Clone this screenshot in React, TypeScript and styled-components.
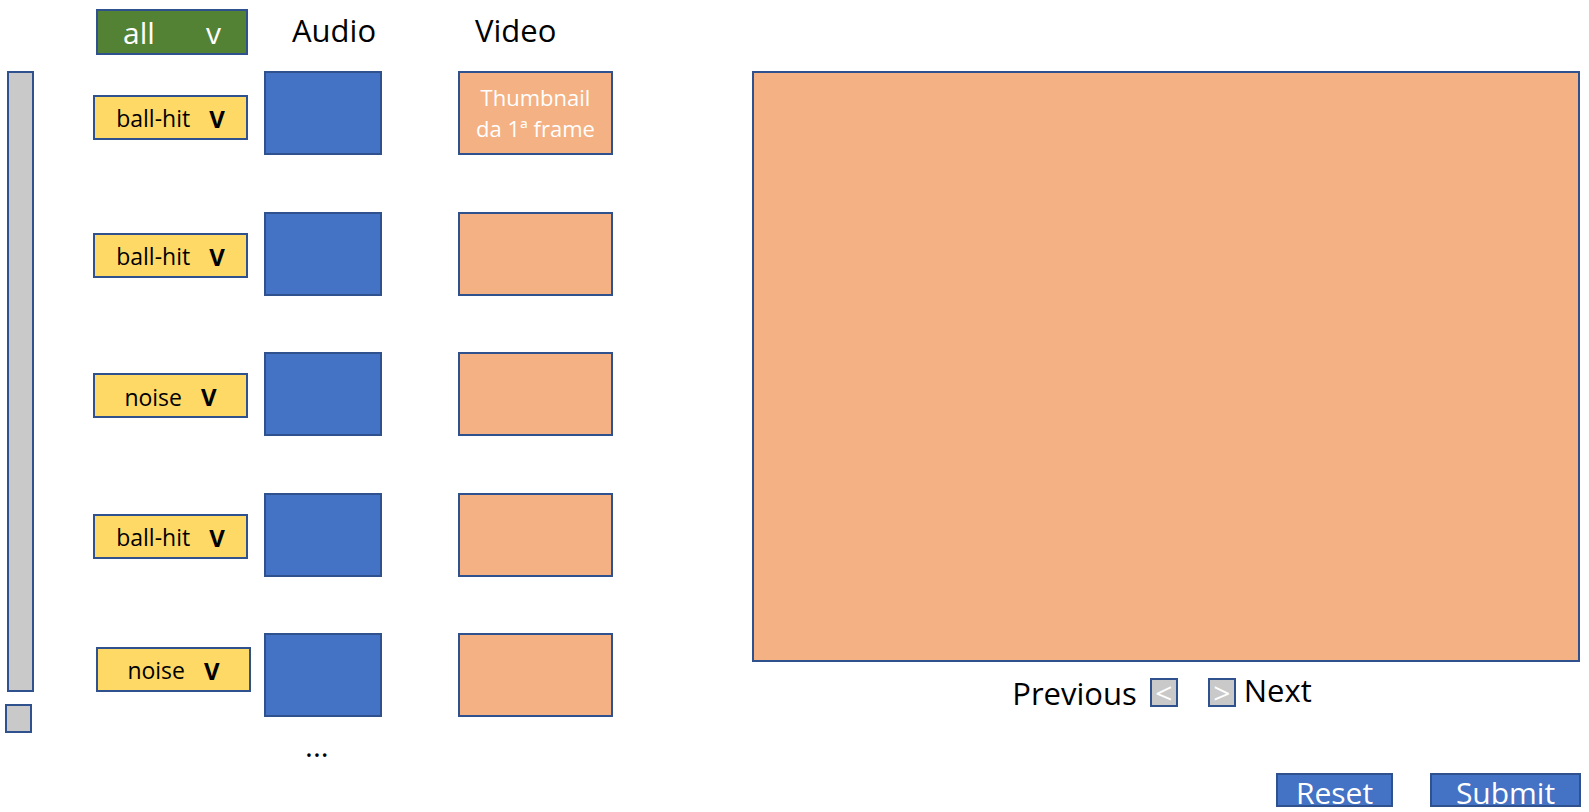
import styled, { createGlobalStyle } from "styled-components";

const BORDER = "#2f528f";

const GlobalStyle = createGlobalStyle`
  * {
    box-sizing: border-box;
  }
  body {
    margin: 0;
    background: #ffffff;
    color: #000000;
    font-family: "Open Sans", "Noto Sans", sans-serif;
  }
`;

const SPage = styled.div`
  display: flex;
  width: 1589px;
  height: 812px;
  padding-top: 9px;
  overflow: hidden;
`;

const SScrollbar = styled.div`
  display: flex;
  flex-direction: column;
  gap: 12px;
  margin-left: 7px;
  margin-top: 62px;
`;

const STrack = styled.div`
  width: 27px;
  height: 621px;
  background: #c9c9c9;
  border: 2px solid ${BORDER};
`;

const SThumb = styled.div`
  width: 27px;
  height: 29px;
  margin-left: -2px;
  background: #c9c9c9;
  border: 2px solid ${BORDER};
`;

const SList = styled.div`
  display: flex;
  flex-direction: column;
  margin-left: 59px;
`;

const SHeader = styled.div`
  display: grid;
  grid-template-columns: 171px 194px 155px;
  align-items: center;
  height: 46px;
  margin-bottom: 16px;
`;

const SFilter = styled.div`
  display: flex;
  justify-content: space-between;
  align-items: center;
  width: 152px;
  height: 46px;
  margin-left: 3px;
  padding: 0 25px;
  background: #548235;
  border: 2px solid ${BORDER};
  color: #ffffff;
  font-size: 30px;
`;

const SColumnTitle = styled.div<{ $indent: number }>`
  padding-left: ${({ $indent }) => $indent}px;
  padding-bottom: 4px;
  font-size: 31px;
`;

const SRows = styled.div`
  display: flex;
  flex-direction: column;
  gap: 56.5px;
`;

const SRow = styled.div`
  display: grid;
  grid-template-columns: 171px 194px 155px;
  align-items: center;
  height: 84px;
`;

const SLabelSelect = styled.div<{ $dx: number; $dy: number }>`
  display: flex;
  justify-content: center;
  align-items: center;
  gap: 19px;
  width: 155px;
  height: 45px;
  margin-left: ${({ $dx }) => $dx}px;
  margin-top: ${({ $dy }) => $dy * 2}px;
  padding-top: 2px;
  background: #ffd966;
  border: 2px solid ${BORDER};
  font-size: 23px;
`;

const SChevron = styled.span`
  font-size: 24px;
  font-weight: 700;
`;

const SAudio = styled.div`
  width: 118px;
  height: 84px;
  background: #4472c4;
  border: 2px solid ${BORDER};
`;

const SVideo = styled.div`
  display: flex;
  justify-content: center;
  align-items: center;
  width: 155px;
  height: 84px;
  background: #f4b183;
  border: 2px solid ${BORDER};
  color: #ffffff;
  font-size: 22px;
  line-height: 31px;
  text-align: center;
  white-space: pre-line;
`;

const SMore = styled.div`
  margin-left: 212px;
  margin-top: 8px;
  font-size: 30px;
`;

const SViewer = styled.div`
  display: flex;
  flex-direction: column;
  width: 828px;
  margin-left: 139px;
`;

const SPreview = styled.div`
  height: 591px;
  margin-top: 62px;
  background: #f4b183;
  border: 2px solid ${BORDER};
`;

const SPager = styled.div`
  display: flex;
  justify-content: center;
  align-items: center;
  height: 29px;
  margin-top: 16px;
  padding-right: 8px;
  font-size: 31px;
`;

const SPagerText = styled.span<{ $raise?: boolean }>`
  margin-bottom: ${({ $raise }) => ($raise ? "6px" : "0")};
`;

const SPageButton = styled.div<{ $gapLeft: number }>`
  display: flex;
  justify-content: center;
  align-items: center;
  width: 28px;
  height: 29px;
  margin-left: ${({ $gapLeft }) => $gapLeft}px;
  background: #c9c9c9;
  border: 2px solid ${BORDER};
  color: #ffffff;
  font-size: 30px;
  line-height: 1;
`;

const SNextText = styled(SPagerText)`
  margin-left: 8px;
`;

const SActions = styled.div`
  display: flex;
  justify-content: flex-end;
  gap: 37px;
  margin-top: 66px;
  margin-right: -1px;
`;

const SActionButton = styled.button<{ $width: number }>`
  width: ${({ $width }) => $width}px;
  height: 34px;
  padding: 3px 0 0;
  background: #4472c4;
  border: 2px solid ${BORDER};
  border-radius: 0;
  color: #ffffff;
  font-family: "Open Sans", "Noto Sans", sans-serif;
  font-size: 30px;
  line-height: 30px;
  overflow: visible;
`;

const rows = [
  { label: "ball-hit", thumb: "Thumbnail\nda 1ª frame", dx: 0, dy: 4 },
  { label: "ball-hit", thumb: "", dx: 0, dy: 1.5 },
  { label: "noise", thumb: "", dx: 0, dy: 1.5 },
  { label: "ball-hit", thumb: "", dx: 0, dy: 1.5 },
  { label: "noise", thumb: "", dx: 3, dy: -6 },
];

const App = () => {
  return (
    <>
      <GlobalStyle />
      <SPage>
        <SScrollbar>
          <STrack />
          <SThumb />
        </SScrollbar>
        <SList>
          <SHeader>
            <SFilter>
              <span>all</span>
              <span>v</span>
            </SFilter>
            <SColumnTitle $indent={28}>Audio</SColumnTitle>
            <SColumnTitle $indent={17}>Video</SColumnTitle>
          </SHeader>
          <SRows>
            {rows.map((row, i) => (
              <SRow key={i}>
                <SLabelSelect $dx={row.dx} $dy={row.dy}>
                  <span>{row.label}</span>
                  <SChevron>V</SChevron>
                </SLabelSelect>
                <SAudio />
                <SVideo>{row.thumb}</SVideo>
              </SRow>
            ))}
          </SRows>
          <SMore>...</SMore>
        </SList>
        <SViewer>
          <SPreview />
          <SPager>
            <SPagerText>Previous</SPagerText>
            <SPageButton $gapLeft={13}>&lt;</SPageButton>
            <SPageButton $gapLeft={30}>&gt;</SPageButton>
            <SNextText $raise>Next</SNextText>
          </SPager>
          <SActions>
            <SActionButton $width={117}>Reset</SActionButton>
            <SActionButton $width={151}>Submit</SActionButton>
          </SActions>
        </SViewer>
      </SPage>
    </>
  );
};

export default App;
